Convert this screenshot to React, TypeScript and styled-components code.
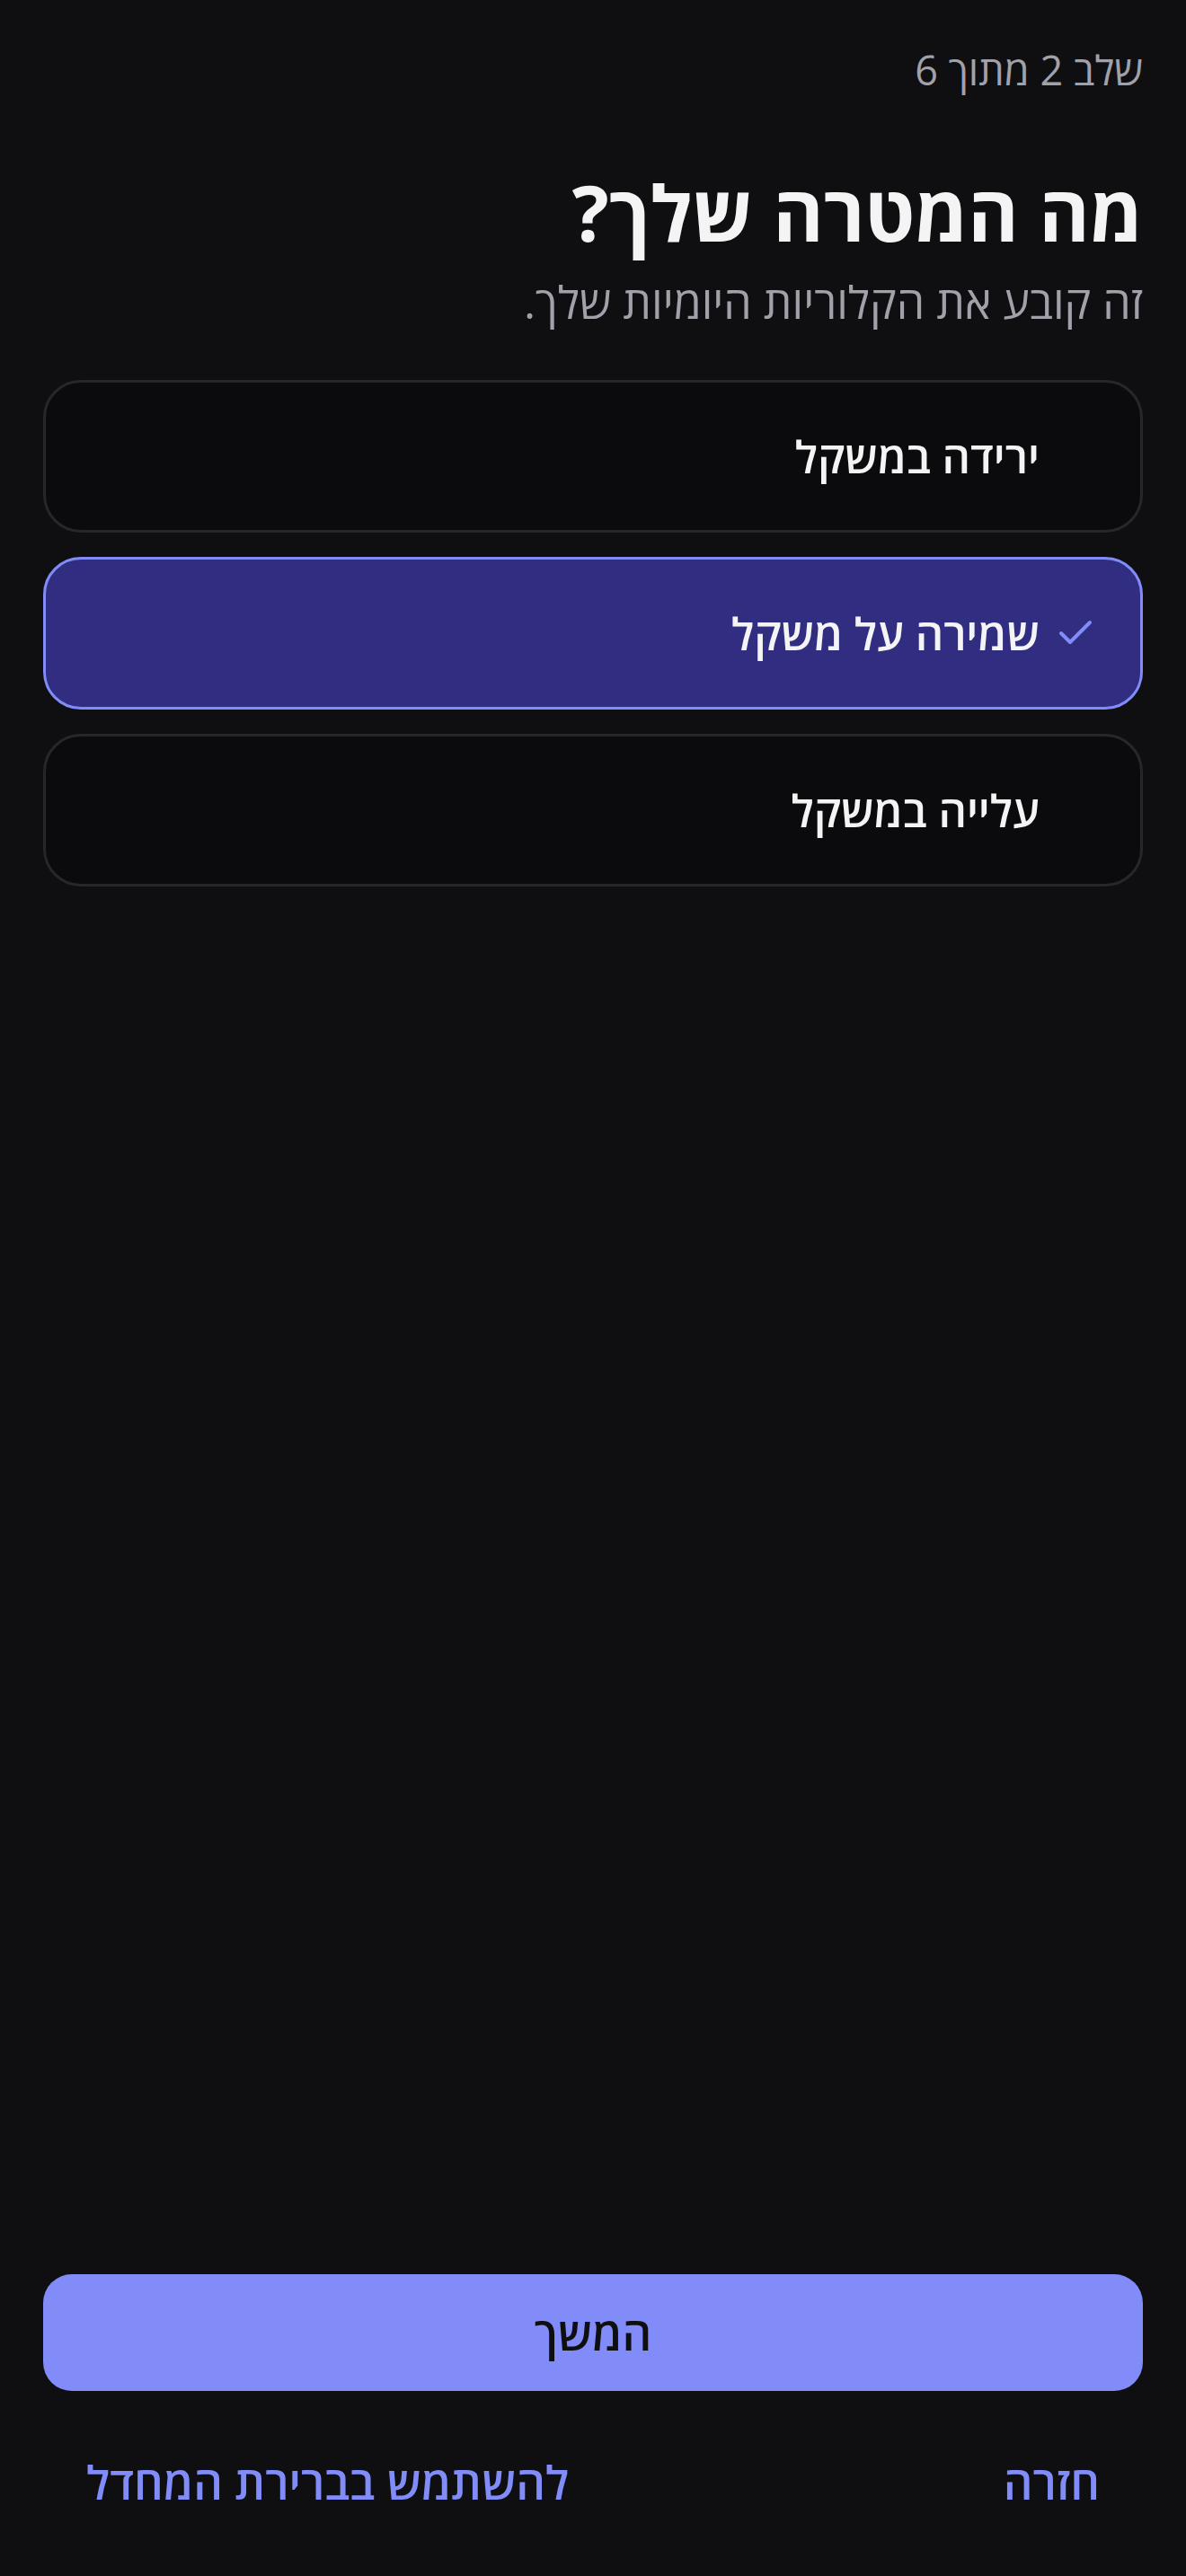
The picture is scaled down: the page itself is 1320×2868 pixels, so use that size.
import { Component, ReactNode } from "react";
import styled, { createGlobalStyle } from "styled-components";
import { Check } from "lucide-react";

const GlobalStyle = createGlobalStyle`
  html, body {
    margin: 0;
    padding: 0;
    background-color: #0f0f12;
  }
  * {
    box-sizing: border-box;
  }
`;

const Page = styled.div`
  min-height: 2868px;
  background-color: #0f0f12;
  font-family: "Open Sans", "Liberation Sans", sans-serif;
  color: #f4f4f5;
  display: flex;
  flex-direction: column;
  padding: 44px 48px 67px;
`;

const Top = styled.div`
  display: flex;
  flex-direction: column;
`;

const StepText = styled.div`
  font-size: 45px;
  line-height: 68px;
  color: #a1a1aa;
`;

const Title = styled.h1`
  margin: 74px 0 0;
  font-size: 86px;
  line-height: 100px;
  font-weight: 700;
  color: #f4f4f5;
`;

const Subtitle = styled.p`
  margin: 12px 0 0;
  font-size: 50px;
  line-height: 76px;
  color: #a1a1aa;
`;

const Options = styled.div`
  margin-top: 49px;
  display: flex;
  flex-direction: column;
  gap: 27px;
`;

const OptionCard = styled.button<{ $selected: boolean }>`
  display: flex;
  align-items: center;
  gap: 16px;
  width: 100%;
  min-height: 170px;
  padding: 0 48px;
  border-radius: 42px;
  border: 3px solid ${(p) => (p.$selected ? "#818cf8" : "#27272a")};
  background-color: ${(p) => (p.$selected ? "#312e81" : "#0b0b0d")};
  color: #f4f4f5;
  font-family: inherit;
  font-size: 49px;
  font-weight: 600;
  text-align: right;
  cursor: pointer;
`;

const CheckSlot = styled.span<{ $visible: boolean }>`
  display: flex;
  width: 48px;
  height: 48px;
  color: #818cf8;
  visibility: ${(p) => (p.$visible ? "visible" : "hidden")};
`;

const Spacer = styled.div`
  flex: 1;
`;

const PrimaryButton = styled.button`
  width: 100%;
  height: 130px;
  border: none;
  border-radius: 32px;
  background-color: #818cf8;
  color: #0f0f12;
  font-family: inherit;
  font-size: 51px;
  font-weight: 600;
  cursor: pointer;
`;

const LinksRow = styled.div`
  margin-top: 63px;
  display: flex;
  justify-content: space-between;
  align-items: center;
`;

const LinkButton = styled.button`
  border: none;
  background: none;
  padding: 0 48px;
  color: #818cf8;
  font-family: inherit;
  font-size: 51px;
  line-height: 76px;
  font-weight: 600;
  cursor: pointer;
`;

const goals = [
  { id: "lose", label: "ירידה במשקל" },
  { id: "maintain", label: "שמירה על משקל" },
  { id: "gain", label: "עלייה במשקל" },
];

export default class App extends Component {
  render(): ReactNode {
    const selected = "maintain";
    return (
      <>
        <GlobalStyle />
        <Page dir="rtl">
          <Top>
            <StepText>שלב 2 מתוך 6</StepText>
            <Title>מה המטרה שלך?</Title>
            <Subtitle>זה קובע את הקלוריות היומיות שלך.</Subtitle>
            <Options>
              {goals.map((g) => (
                <OptionCard key={g.id} $selected={g.id === selected}>
                  <CheckSlot $visible={g.id === selected}>
                    <Check size={48} strokeWidth={2} />
                  </CheckSlot>
                  {g.label}
                </OptionCard>
              ))}
            </Options>
          </Top>
          <Spacer />
          <PrimaryButton>המשך</PrimaryButton>
          <LinksRow>
            <LinkButton>חזרה</LinkButton>
            <LinkButton>להשתמש בברירת המחדל</LinkButton>
          </LinksRow>
        </Page>
      </>
    );
  }
}
